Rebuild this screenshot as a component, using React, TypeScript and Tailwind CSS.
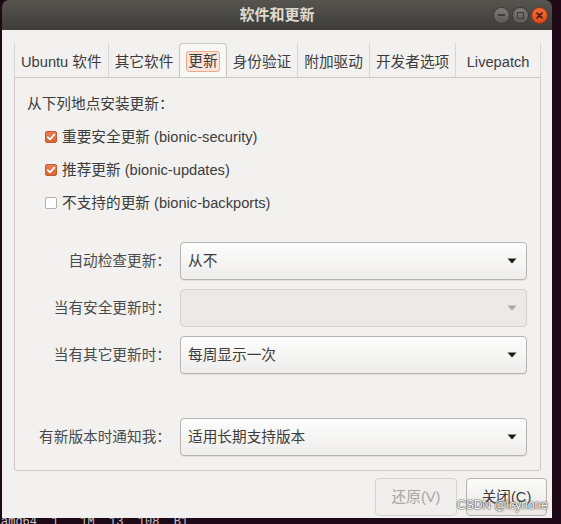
import React from 'react'

const tabs = ['Ubuntu 软件', '其它软件', '更新', '身份验证', '附加驱动', '开发者选项', 'Livepatch']

function Check({ checked }: { checked: boolean }) {
  if (checked) {
    return (
      <div className="flex h-[12px] w-[12px] items-center justify-center rounded-[2px] border border-[#c4592f] bg-linear-to-b from-[#ec7d52] to-[#dc6234]">
        <svg width="10" height="10" viewBox="0 0 10 10">
          <path d="M1.8 5.2 L4 7.4 L8.3 2.6" fill="none" stroke="#fff" strokeWidth="1.8" strokeLinecap="round" strokeLinejoin="round" />
        </svg>
      </div>
    )
  }
  return <div className="h-[12px] w-[12px] rounded-[2px] border border-[#b3aea9] bg-white" />
}

function Combo({ value, disabled }: { value?: string; disabled?: boolean }) {
  return (
    <div
      className={
        disabled
          ? 'flex h-[38px] flex-1 items-center justify-between rounded-[4px] border border-[#d5d1cd] bg-[#ebeae9] pl-[7px] pr-[9px]'
          : 'flex h-[38px] flex-1 items-center justify-between rounded-[4px] border border-[#b8b3ae] bg-linear-to-b from-[#fdfdfd] to-[#eeedec] pl-[7px] pr-[9px] shadow-[0_1px_0_rgba(0,0,0,0.07)]'
      }
    >
      <span className="text-[#3c3c3c]">{value}</span>
      <svg width="10" height="6" viewBox="0 0 10 6">
        <path d="M0.5 0.5 L9.5 0.5 L5 5.5 Z" fill={disabled ? '#a9a6a3' : '#1c1c1c'} />
      </svg>
    </div>
  )
}

function Row({ label, children }: { label: string; children: React.ReactNode }) {
  return (
    <div className="flex items-center gap-[9px]">
      <div className="w-[156px] text-right text-[#4a4a4a]">{label}</div>
      {children}
    </div>
  )
}

export default function App() {
  return (
    <div className="relative flex h-[524px] w-[561px] flex-col overflow-hidden bg-[#1e0a17] font-['Liberation_Sans','Noto_Sans_CJK_SC',sans-serif] text-[14.67px] leading-5 text-[#3c3c3c]">
      <div className="ml-[2px] flex h-[518px] w-[550px] flex-col overflow-hidden rounded-t-[7px]">
        {/* title bar */}
        <div className="grid h-[30px] grid-cols-[1fr_auto_1fr] items-center bg-linear-to-b from-[#55544f] to-[#3e3d39]">
          <div />
          <div className="text-[15px] font-bold text-[#dfdbd2]">软件和更新</div>
          <div className="flex justify-end gap-[2px] pr-[4px]">
            <div className="flex h-[17px] w-[17px] items-center justify-center rounded-full border border-[#3a3935] bg-linear-to-b from-[#7d7c77] to-[#5c5b57]">
              <div className="h-[2px] w-[7px] bg-[#3d3c38]" />
            </div>
            <div className="flex h-[17px] w-[17px] items-center justify-center rounded-full border border-[#3a3935] bg-linear-to-b from-[#7d7c77] to-[#5c5b57]">
              <div className="h-[7px] w-[7px] border-[1.5px] border-[#3d3c38]" />
            </div>
            <div className="flex h-[17px] w-[17px] items-center justify-center rounded-full border border-[#8a3414] bg-linear-to-b from-[#f26b3a] to-[#de4a17]">
              <svg width="7" height="7" viewBox="0 0 7 7">
                <path d="M1 1 L6 6 M6 1 L1 6" stroke="#3b1a0c" strokeWidth="1.6" strokeLinecap="round" />
              </svg>
            </div>
          </div>
        </div>

        {/* body */}
        <div className="flex flex-1 flex-col bg-[#f2f1f0] pt-[13px]">
          <div className="ml-[12px] mr-[11px] flex h-[34px] whitespace-nowrap">
            {tabs.map((t, i) =>
              i === 2 ? (
                <div key={t} className="flex shrink-0 items-center rounded-t-[4px] border border-b-0 border-[#c9c4bf] bg-[#f8f8f7] px-[6px] pt-[2px]">
                  <span className="rounded-[3px] border border-[#f0a88d] bg-[#fbe4da] px-[1px] leading-[19px]">{t}</span>
                </div>
              ) : (
                <div
                  key={t}
                  className={`flex shrink-0 items-center px-[6px] pt-[4px] ${i === 3 ? '' : 'border-l border-[#d8d4d0]'} ${i === 6 ? 'flex-1 justify-center border-r' : ''}`}
                >
                  {t}
                </div>
              )
            )}
          </div>

          {/* notebook page */}
          <div className="ml-[12px] mr-[11px] flex h-[394px] flex-col rounded-b-[3px] border border-[#cdc8c3] pt-[16px]">
            <div className="pl-[12px]">从下列地点安装更新：</div>
            <div className="mt-[13px] flex flex-col gap-[13px] pl-[30px]">
              <div className="flex items-center gap-[5px]">
                <Check checked />
                <span>重要安全更新 (bionic-security)</span>
              </div>
              <div className="flex items-center gap-[5px]">
                <Check checked />
                <span>推荐更新 (bionic-updates)</span>
              </div>
              <div className="flex items-center gap-[5px]">
                <Check checked={false} />
                <span>不支持的更新 (bionic-backports)</span>
              </div>
            </div>

            <div className="mt-[29px] flex flex-col gap-[9px] pr-[13px]">
              <Row label="自动检查更新：">
                <Combo value="从不" />
              </Row>
              <Row label="当有安全更新时：">
                <Combo disabled />
              </Row>
              <Row label="当有其它更新时：">
                <Combo value="每周显示一次" />
              </Row>
            </div>
            <div className="mt-[44px] pr-[13px]">
              <Row label="有新版本时通知我：">
                <Combo value="适用长期支持版本" />
              </Row>
            </div>
          </div>

          {/* dialog buttons */}
          <div className="mt-[7px] flex justify-end gap-[9px] pr-[5px]">
            <div className="flex h-[38px] w-[82px] items-center justify-center rounded-[4px] border border-[#d6d2ce] bg-[#efeeed] text-[#a8a4a0]">
              还原(V)
            </div>
            <div className="flex h-[38px] w-[81px] items-center justify-center rounded-[4px] border border-[#b7b2ad] bg-linear-to-b from-[#fbfbfa] to-[#e9e8e7] text-[#3c3c3c]">
              关闭(C)
            </div>
          </div>
        </div>
      </div>

      {/* terminal behind the window */}
      <div className="h-[6px] overflow-hidden whitespace-pre pl-[1px] font-['Liberation_Mono',monospace] text-[12px] leading-[9px] text-[#c9c4c7]">
        amd64  1   1M  13  108  B1
      </div>

      <div className="absolute left-[457px] top-[497px] font-['Liberation_Sans',sans-serif] text-[12px] leading-4 text-white [text-shadow:0_0_2px_#333,0_0_1px_#000]">
        CSDN @lcynone
      </div>
    </div>
  )
}
